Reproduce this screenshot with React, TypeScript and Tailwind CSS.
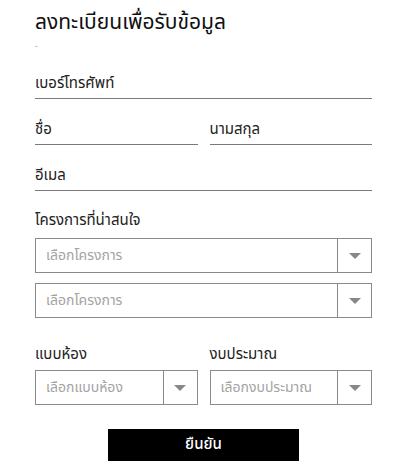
function LineField({ label }: { label: string }) {
  return (
    <div className="flex h-[26px] items-end border-b border-[#7a7a7a] pb-[4px]">
      <span className="block text-[15px] leading-[20px] text-[#222]">{label}</span>
    </div>
  );
}

function FieldLabel({ children }: { children: string }) {
  return <div className="h-[20px] text-[15px] leading-[20px] text-[#222]">{children}</div>;
}

function SelectBox({ placeholder }: { placeholder: string }) {
  return (
    <div className="flex h-[35px] border border-[#8a8a8a] bg-white">
      <div className="flex min-w-0 flex-1 items-center pl-[10px] text-[14px] leading-[20px] text-[#a3a3a3]">
        {placeholder}
      </div>
      <div className="flex w-[34px] items-center justify-center border-l border-[#8a8a8a]">
        <span className="h-0 w-0 border-x-[6px] border-t-[6px] border-x-transparent border-t-[#888]" />
      </div>
    </div>
  );
}

export default function App() {
  return (
    <div className="h-[470px] w-[400px] overflow-hidden bg-white pl-[35px] pr-[28px] pt-[7px] font-[family-name:'Noto_Sans_Thai','Liberation_Sans',sans-serif]">
      <h1 className="h-[32px] text-[21px] leading-[32px] text-[#111]">ลงทะเบียนเพื่อรับข้อมูล</h1>
      <div className="mt-[7px] h-px w-[3px] bg-[#c8c8c8]" />

      <div className="mt-[26px]">
        <LineField label="เบอร์โทรศัพท์" />
      </div>

      <div className="mt-[20px] grid grid-cols-2 gap-[12px]">
        <LineField label="ชื่อ" />
        <LineField label="นามสกุล" />
      </div>

      <div className="mt-[20px]">
        <LineField label="อีเมล" />
      </div>

      <div className="mt-[20px]">
        <FieldLabel>โครงการที่น่าสนใจ</FieldLabel>
      </div>
      <div className="mt-[7px] flex flex-col gap-[10px]">
        <SelectBox placeholder="เลือกโครงการ" />
        <SelectBox placeholder="เลือกโครงการ" />
      </div>

      <div className="mt-[27px] grid grid-cols-2 gap-[12px]">
        <div>
          <FieldLabel>แบบห้อง</FieldLabel>
          <div className="mt-[5px]">
            <SelectBox placeholder="เลือกแบบห้อง" />
          </div>
        </div>
        <div>
          <FieldLabel>งบประมาณ</FieldLabel>
          <div className="mt-[5px]">
            <SelectBox placeholder="เลือกงบประมาณ" />
          </div>
        </div>
      </div>

      <div className="mt-[24px] flex justify-center">
        <button className="flex h-[32px] w-[191px] items-center justify-center bg-black text-[15px] font-medium leading-[20px] text-white">
          ยืนยัน
        </button>
      </div>
    </div>
  );
}
